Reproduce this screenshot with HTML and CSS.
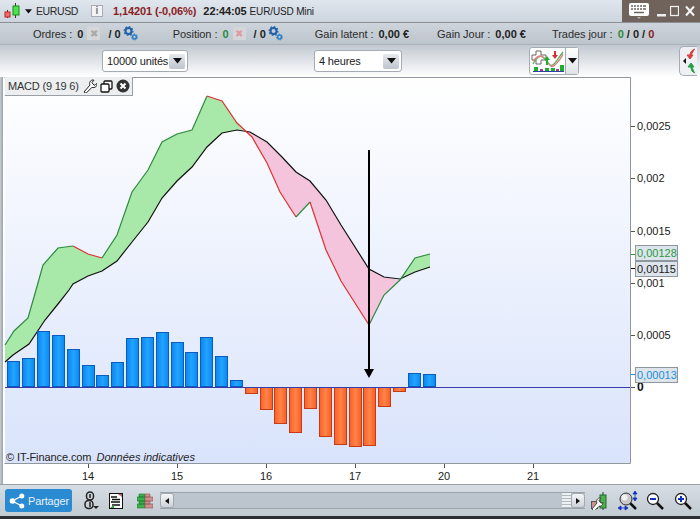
FILE: index.html
```html
<!DOCTYPE html>
<html lang="en">
<head>
  <meta charset="UTF-8">
  <meta name="viewport" content="width=device-width, initial-scale=1.0">
  <title>EURUSD Mini</title>
  <link rel="stylesheet" href="styles.css">
</head>
<body>
  <!-- Shared icons -->
  <svg class="defs" width="0" height="0">
    <defs>
      <symbol id="gears" viewBox="0 0 15 15">
        <circle cx="5.500" cy="5" r="3" fill="none" stroke="#1f5fa8" stroke-width="2"/>
        <circle cx="5.500" cy="5" r="4.400" fill="none" stroke="#1f5fa8" stroke-width="1.200" stroke-dasharray="1.700 1.700"/>
        <circle cx="11.500" cy="11" r="1.900" fill="none" stroke="#2f7fc8" stroke-width="1.500"/>
        <circle cx="11.500" cy="11" r="3" fill="none" stroke="#2f7fc8" stroke-width="1" stroke-dasharray="1.300 1.300"/>
      </symbol>
      <symbol id="caret" viewBox="0 0 9 6">
        <path d="M0 0h9L4.500 5.500z" fill="#111"/>
      </symbol>
      <linearGradient id="plot-bg" x1="0" y1="0" x2="0" y2="1">
        <stop offset="0" stop-color="#ffffff"/>
        <stop offset="1" stop-color="#d9e3fb"/>
      </linearGradient>
      <linearGradient id="blue-bar" x1="0" y1="0" x2="1" y2="0">
        <stop offset="0" stop-color="#0a84f0"/>
        <stop offset="0.500" stop-color="#23a4ff"/>
        <stop offset="1" stop-color="#0a88f2"/>
      </linearGradient>
      <linearGradient id="red-bar" x1="0" y1="0" x2="1" y2="0">
        <stop offset="0" stop-color="#fb5f26"/>
        <stop offset="0.500" stop-color="#ff8448"/>
        <stop offset="1" stop-color="#f95c22"/>
      </linearGradient>
    </defs>
  </svg>

  <div class="app">
    <!-- Title bar -->
    <header class="title-bar">
      <svg class="icon-candles" width="17" height="16" viewBox="0 0 17 16">
        <path d="M3.500 7v8M11.500 0v15" stroke="#333" fill="none"/>
        <rect x="1" y="9" width="5" height="5" fill="#f07070" stroke="#c02020"/>
        <rect x="9" y="3" width="6" height="9" fill="#50e050" stroke="#109010"/>
      </svg>
      <svg class="caret-top" width="7" height="5"><use href="#caret"/></svg>
      <span class="symbol">EURUSD</span>
      <span class="info-btn">i</span>
      <span class="price">1,14201 (-0,06%)</span>
      <span class="clock">22:44:05</span>
      <span class="market">EUR/USD Mini</span>
      <div class="win-controls">
        <svg width="20" height="16" viewBox="0 0 20 16">
          <rect x="0" y="0" width="20" height="13" rx="2" fill="#fff"/>
          <path d="M2 3h2M5 3h2M8 3h2M11 3h2M14 3h3M2 6h2M5 6h2M8 6h2M11 6h2M14 6h3M5 9.500h10" stroke="#6f635c" stroke-width="1.500"/>
          <path d="M8 14l2 2 2-2z" fill="#b8b0aa"/>
        </svg>
        <svg class="win-min" width="9" height="12" viewBox="0 0 9 12"><rect y="9" width="9" height="2.500" fill="#eee"/></svg>
        <svg class="win-max" width="9" height="12" viewBox="0 0 9 12"><rect x="0.500" y="1.500" width="8" height="9" fill="none" stroke="#eee" stroke-width="1.300"/></svg>
        <svg class="win-close" width="10" height="12" viewBox="0 0 10 12"><path d="M1 1.500l8 9M9 1.500l-8 9" stroke="#f4f4f4" stroke-width="2"/></svg>
      </div>
    </header>

    <!-- Account summary -->
    <div class="summary-bar">
      <span class="label label-orders">Ordres :</span>
      <b class="val">0</b>
      <span class="x-icon">&#10006;</span>
      <b class="val slash">/ 0</b>
      <svg class="gears" width="15" height="15"><use href="#gears"/></svg>

      <span class="label label-position">Position :</span>
      <b class="val green">0</b>
      <span class="x-icon x-red">&#10006;</span>
      <b class="val slash">/ 0</b>
      <svg class="gears" width="15" height="15"><use href="#gears"/></svg>

      <span class="label label-latent">Gain latent :</span>
      <b class="val">0,00 €</b>
      <span class="label label-jour">Gain Jour :</span>
      <b class="val">0,00 €</b>
      <span class="label label-trades">Trades jour :</span>
      <b class="val"><span class="green">0</span> / 0 / <span class="dark-red">0</span></b>
    </div>

    <!-- Selectors -->
    <div class="options-bar">
      <div class="select select-qty">
        <span>10000 unités</span>
        <i class="select-btn"><svg width="9" height="6"><use href="#caret"/></svg></i>
      </div>
      <div class="select select-period">
        <span>4 heures</span>
        <i class="select-btn"><svg width="9" height="6"><use href="#caret"/></svg></i>
      </div>
      <div class="indicator-btn">
        <svg width="34" height="24" viewBox="0 0 34 24">
          <path d="M4 2h5v4h5v5h-5v4h-5v-4h-4v-5h4z" transform="translate(1 0)" fill="#fff" stroke="#666"/>
          <path d="M2 15c5-9 8-9 12-5s5 9 9 5 5-7 9-12" fill="none" stroke="#5cae5c" stroke-width="1.300"/>
          <path d="M2 12c6-7 9-6 13-1s5 9 9 5 6-6 8-11" fill="none" stroke="#e08080" stroke-width="1.300"/>
          <path d="M13 11l3-4 3 4h-2v5h-2v-5z" fill="#18b030"/>
          <path d="M23 2h2v4h2l-3 4-3-4h2z" fill="#d83030"/>
          <path d="M3 18h4v4h-4zM20 19h4v3h-4zM29 16h4v6h-4zM14 19h4v3h-4z" fill="#18b030"/>
          <path d="M9 20h3v2h-3zM25 20h3v2h-3z" fill="#b83090"/>
          <path d="M2 22.500h31" stroke="#3040a0"/>
        </svg>
        <i class="indicator-caret"><svg width="9" height="6"><use href="#caret"/></svg></i>
      </div>
      <div class="side-tab">
        <svg width="17" height="30" viewBox="0 0 17 30">
          <path d="M3 15l3-3v6z" fill="#111"/>
          <path d="M15 3c-3 1-5 3-5 6v3M7 9l3 4 3-4z" fill="#d84040" stroke="#d84040"/>
          <path d="M15 27c-3-1-4-3-4-6v-3M8 21l3-4 3 4z" fill="#20a040" stroke="#20a040"/>
        </svg>
      </div>
    </div>

    <!-- Chart -->
    <main class="chart-frame">
      <div class="legend">
        <span class="legend-name">MACD (9 19 6)</span>
        <svg width="14" height="14" viewBox="0 0 14 14">
          <path d="M1 13l6-7c-1-2 0-5 3-5l1 .300-2 2 1 2 2 1 2-2c.300 3-2 5-5 4l-6 6z" fill="#fff" stroke="#222"/>
        </svg>
        <svg width="13" height="13" viewBox="0 0 13 13">
          <rect x="4" y="1" width="8" height="8" rx="1" fill="#fff" stroke="#111" stroke-width="1.300"/>
          <rect x="1" y="4" width="8" height="8" rx="1" fill="#fff" stroke="#111" stroke-width="1.300"/>
        </svg>
        <svg width="14" height="14" viewBox="0 0 14 14">
          <circle cx="7" cy="7" r="6.500" fill="#333"/>
          <path d="M4.500 4.500l5 5M9.500 4.500l-5 5" stroke="#fff" stroke-width="2"/>
        </svg>
      </div>

      <svg class="chart" width="693" height="407" viewBox="4 77 693 407">
        <rect x="5" y="78" width="625" height="385" fill="url(#plot-bg)"/>

        <!-- MACD / signal ribbon -->
        <polygon class="band-green" points="5,345 14,331 28,318 36,290 43,265 58,248 73,246 88,254 102,258 117,235 132,192 148,170 162,142 177,134 192,130 207,96 222,101 237,123 243,130 237,130 222,133 207,147 192,167 177,181 162,198 148,222 132,242 117,261 102,271 88,276 73,284 69,290 58,304 45,320 29,344 13,355 5,362"/>
        <polygon class="band-pink" points="243,130 250,132 267,142 282,157 296,172 310,181 326,200 341,225 369,269 384,277 399,280 384,295 369,325 341,281 326,250 310,202 296,217 280,192 267,163 252,137"/>
        <polygon class="band-green" points="399,280 415,258 430,254 430,267 415,272"/>

        <polyline class="line-signal" points="5,362 13,355 29,344 45,320 58,304 69,290 73,284 88,276 102,271 117,261 132,242 148,222 162,198 177,181 192,167 207,147 222,133 237,130 250,132 267,142 282,157 296,172 310,181 326,200 341,225 369,269 384,277 400,279 415,272 430,267"/>
        <polyline class="line-up" points="5,345 14,331 28,318 36,290 43,265 58,248 73,246"/>
        <polyline class="line-down" points="73,246 88,254 102,258"/>
        <polyline class="line-up" points="102,258 117,235 132,192 148,170 162,142 177,134 192,130 207,96"/>
        <polyline class="line-down" points="207,96 222,101 237,123 252,137 267,163 280,192 296,217"/>
        <polyline class="line-up" points="296,217 310,202"/>
        <polyline class="line-down" points="310,202 326,250 341,281 369,325"/>
        <polyline class="line-up" points="369,325 384,295 400,280 415,258 430,254"/>

        <!-- Histogram -->
        <g class="bars-up">
          <rect x="7.500" y="361.500" width="12" height="25"/>
          <rect x="22.500" y="358.500" width="12" height="28"/>
          <rect x="37.500" y="331.500" width="12" height="55"/>
          <rect x="52.500" y="335.500" width="12" height="51"/>
          <rect x="67.500" y="349.500" width="12" height="37"/>
          <rect x="82.500" y="365.500" width="12" height="21"/>
          <rect x="96.500" y="375.500" width="12" height="11"/>
          <rect x="111.500" y="362.500" width="12" height="24"/>
          <rect x="126.500" y="338.500" width="12" height="48"/>
          <rect x="141.500" y="337.500" width="12" height="49"/>
          <rect x="156.500" y="332.500" width="12" height="54"/>
          <rect x="171.500" y="342.500" width="12" height="44"/>
          <rect x="185.500" y="352.500" width="12" height="34"/>
          <rect x="200.500" y="337.500" width="12" height="49"/>
          <rect x="215.500" y="356.500" width="12" height="30"/>
          <rect x="230.500" y="380.500" width="12" height="6"/>
          <rect x="408.500" y="373.500" width="12" height="13"/>
          <rect x="423.500" y="374.500" width="12" height="12"/>
        </g>
        <g class="bars-down">
          <rect x="245.500" y="387.500" width="12" height="6"/>
          <rect x="260.500" y="387.500" width="12" height="22"/>
          <rect x="274.500" y="387.500" width="12" height="36"/>
          <rect x="289.500" y="387.500" width="12" height="45"/>
          <rect x="304.500" y="387.500" width="12" height="21"/>
          <rect x="319.500" y="387.500" width="12" height="49"/>
          <rect x="334.500" y="387.500" width="12" height="57"/>
          <rect x="349.500" y="387.500" width="12" height="59"/>
          <rect x="363.500" y="387.500" width="12" height="58"/>
          <rect x="378.500" y="387.500" width="12" height="19"/>
          <rect x="393.500" y="387.500" width="12" height="4"/>
        </g>
        <line class="zero-line" x1="5" y1="387.500" x2="630" y2="387.500"/>

        <!-- Arrow drawn on the chart -->
        <rect x="368" y="150" width="2" height="222" fill="#000"/>
        <polygon points="364,369 374,369 369,378" fill="#000"/>

        <!-- Frame -->
        <path class="plot-frame" d="M4.500 77.500H630.500V463.500H4.500"/>

        <!-- Price axis -->
        <path class="tick" d="M631 126.500h4M631 178.500h4M631 231.500h4M631 283.500h4M631 335.500h4M631 387.500h4"/>
        <g class="axis-text">
          <text x="637" y="130">0,0025</text>
          <text x="637" y="182">0,002</text>
          <text x="637" y="235">0,0015</text>
          <text x="637" y="287">0,001</text>
          <text x="637" y="339">0,0005</text>
        </g>
        <text class="axis-zero" x="637" y="391">0</text>

        <path d="M631 254.500h4" stroke="#2a9a40"/>
        <rect class="tag" x="635.500" y="245.500" width="42" height="15"/>
        <text class="tag-text tag-green" x="637" y="257">0,00128</text>
        <path d="M631 268.500h4" stroke="#111"/>
        <rect class="tag" x="635.500" y="261.500" width="42" height="15"/>
        <text class="tag-text tag-black" x="637" y="273">0,00115</text>
        <path d="M631 374.500h4" stroke="#2090e0"/>
        <rect class="tag" x="635.500" y="367.500" width="42" height="15"/>
        <text class="tag-text tag-blue" x="637" y="379">0,00013</text>

        <!-- Time axis -->
        <path class="tick" d="M88.500 464v4M177.500 464v4M266.500 464v4M355.500 464v4M444.500 464v4M533.500 464v4"/>
        <g class="axis-text" text-anchor="middle">
          <text x="88" y="480">14</text>
          <text x="177" y="480">15</text>
          <text x="266" y="480">16</text>
          <text x="355" y="480">17</text>
          <text x="444" y="480">20</text>
          <text x="533" y="480">21</text>
        </g>
      </svg>

      <div class="credit"><span class="credit-name">© IT-Finance.com</span> <em>Données indicatives</em></div>
    </main>

    <!-- Bottom toolbar -->
    <footer class="tool-bar">
      <div class="share-btn">
        <svg width="16" height="16" viewBox="0 0 16 16">
          <path d="M3 8l10-5M3 8l10 5" stroke="#fff" stroke-width="1.300"/>
          <circle cx="3.500" cy="8" r="2.800" fill="#fff"/>
          <circle cx="12.800" cy="3" r="2.500" fill="#fff"/>
          <circle cx="12.800" cy="13" r="2.500" fill="#fff"/>
        </svg>
        <span>Partager</span>
      </div>
      <svg class="tool-chain" width="15" height="19" viewBox="0 0 15 19">
        <rect x="2.500" y="1" width="7" height="8" rx="3.500" fill="none" stroke="#222" stroke-width="1.500"/>
        <path d="M6 3v4M6 11v5" stroke="#222" stroke-width="1.500"/>
        <rect x="1" y="9.500" width="8" height="8" rx="3.500" fill="none" stroke="#222" stroke-width="1.500"/>
        <path d="M9 15h6l-3 3z" fill="#222"/>
      </svg>
      <svg class="tool-doc" width="14" height="16" viewBox="0 0 14 16">
        <rect x="0.500" y="0.500" width="13" height="15" fill="#fff" stroke="#111"/>
        <path d="M2 4h6M3 6.500h8M2 9h9M3 12h8" stroke="#111" stroke-width="1.300"/>
        <path d="M9 1h4v3z" fill="#c06060"/>
        <path d="M1 15l4-3v3z" fill="#30a040"/>
      </svg>
      <svg class="tool-bricks" width="16" height="16" viewBox="0 0 16 16">
        <path d="M2 1h6v3h-6zM0 4h8v4h-8zM2 8h6v3h-6zM0 11h8v4h-8z" fill="#3cb04c" stroke="#1a7a2c" stroke-width="0.600"/>
        <path d="M8 1h5v3h-5zM8 4h8v4h-8zM8 8h5v3h-5zM8 11h8v4h-8z" fill="#d09090" stroke="#905050" stroke-width="0.600"/>
      </svg>
      <div class="scrollbar">
        <i class="scroll-btn"><b class="arrow-left"></b></i>
        <span class="scroll-track"></span>
        <i class="scroll-grip"></i>
        <i class="scroll-btn"><b class="arrow-right"></b></i>
      </div>
      <svg class="tool-wrench" width="17" height="18" viewBox="0 0 17 18">
        <rect x="9" y="3" width="6" height="13" fill="#50b050" stroke="#1a6a2a"/>
        <path d="M12 0v3M12 16v2" stroke="#333"/>
        <rect x="0.500" y="9.500" width="6" height="7" fill="#d09090" stroke="#555"/>
        <path d="M1 17l5-6c-1-2 0-5 3-5l1 .300-2 2 1 2 2 1 1-1c0 3-2 4-4 4l-5 5z" fill="#fff" stroke="#222" stroke-width="0.800"/>
      </svg>
      <svg class="tool-zoom-fit" width="20" height="20" viewBox="0 0 20 20">
        <path d="M12 12l6 6" stroke="#111" stroke-width="2.500"/>
        <circle cx="8" cy="8" r="6" fill="#c8c8c8" stroke="#333"/>
        <circle cx="6.500" cy="6.500" r="3" fill="#f2f2f2"/>
        <path d="M17 0l-2 3h4zM17 10l-2-3h4zM17 3v4" fill="#1030c0" stroke="#1030c0" stroke-width="0.800"/>
        <path d="M0 17l3-2v4zM10 17l-3-2v4zM3 17h4" fill="#1030c0" stroke="#1030c0" stroke-width="0.800"/>
      </svg>
      <svg class="tool-zoom" width="18" height="18" viewBox="0 0 18 18">
        <path d="M10 10l7 7" stroke="#111" stroke-width="2.500"/>
        <circle cx="7" cy="7" r="5.500" fill="#fff" stroke="#222" stroke-width="1.300"/>
        <path d="M4 7h6" stroke="#1030c0" stroke-width="2"/>
      </svg>
      <svg class="tool-zoom tool-zoom-in" width="18" height="18" viewBox="0 0 18 18">
        <path d="M10 10l7 7" stroke="#111" stroke-width="2.500"/>
        <circle cx="7" cy="7" r="5.500" fill="#fff" stroke="#222" stroke-width="1.300"/>
        <path d="M4 7h6M7 4v6" stroke="#1030c0" stroke-width="2"/>
      </svg>
    </footer>
    <div class="bottom-edge"></div>
  </div>
</body>
</html>
```

FILE: styles.css
```css
/* Page */
html, body {
  margin: 0;
  padding: 0;
  height: 100%;
  overflow: hidden;
}

body {
  font-family: "Liberation Sans", Arial, sans-serif;
  font-size: 11px;
  color: #222;
  background: #c8d0d8;
}

.defs {
  position: absolute;
}

.app {
  display: flex;
  flex-direction: column;
  width: 700px;
  height: 519px;
}

/* Title bar */
.title-bar {
  display: flex;
  align-items: center;
  height: 22px;
  padding-left: 4px;
  background: linear-gradient(to bottom, #dfe6ee, #ccd4dd);
  border-bottom: 1px solid #8b9096;
}

.caret-top {
  margin-left: 4px;
}

.symbol {
  margin-left: 4px;
  font-size: 10.5px;
  letter-spacing: -0.4px;
  color: #2a2a2a;
}

.info-btn {
  width: 12px;
  height: 12px;
  margin-left: 13px;
  background: #f4f4f4;
  border: 1px solid #aab;
  box-sizing: border-box;
  color: #777;
  font-weight: bold;
  font-size: 10px;
  line-height: 10px;
  text-align: center;
}

.price {
  margin-left: 10px;
  font-weight: bold;
  letter-spacing: -0.1px;
  color: #8c1c24;
}

.clock {
  margin-left: 7px;
  font-weight: bold;
  letter-spacing: -0.1px;
  color: #222;
}

.market {
  margin-left: 3px;
  font-size: 10px;
  letter-spacing: -0.15px;
}

.win-controls {
  display: flex;
  align-items: center;
  align-self: stretch;
  margin-left: auto;
  width: 78px;
  padding-left: 7px;
  box-sizing: border-box;
  background: #6f635c;
}

.win-min {
  margin-left: 8px;
}

.win-max {
  margin-left: 4px;
}

.win-close {
  margin-left: 6px;
}

/* Account summary */
.summary-bar {
  display: flex;
  align-items: center;
  height: 22px;
  background: linear-gradient(to bottom, #cdd4dc, #bcc4cc);
  border-bottom: 1px solid #a8afb6;
  box-sizing: border-box;
  padding-left: 33px;
  color: #2c2c2c;
}

.label {
  letter-spacing: -0.05px;
}

.val {
  margin-left: 5px;
  color: #222;
}

.slash {
  margin-left: 8px;
}

.green {
  color: #2a8a3c;
}

.dark-red {
  color: #8c1c24;
}

.x-icon {
  width: 13px;
  height: 13px;
  margin-left: 4px;
  background: #d4d6d8;
  color: #aaa;
  font-size: 10px;
  line-height: 13px;
  text-align: center;
}

.x-red {
  color: #e09aa0;
}

.gears {
  margin-left: 2px;
}

.label-position {
  margin-left: 35px;
}

.label-latent {
  margin-left: 32px;
}

.label-jour {
  margin-left: 28px;
}

.label-trades {
  margin-left: 26px;
}

/* Selectors */
.options-bar {
  display: flex;
  align-items: center;
  height: 32px;
  box-sizing: border-box;
  padding: 0 3px 0 102px;
  background: linear-gradient(to bottom, #c2c9d1, #ffffff);
}

.select {
  display: flex;
  align-items: center;
  justify-content: space-between;
  height: 22px;
  padding: 0 2px 0 4px;
  box-sizing: border-box;
  background: #fff;
  border: 1px solid #a4abb2;
  border-radius: 3px;
  font-size: 11px;
  letter-spacing: -0.15px;
  white-space: nowrap;
}

.select-qty {
  width: 86px;
}

.select-period {
  width: 88px;
  margin-left: 126px;
}

.select-btn {
  display: flex;
  align-items: center;
  justify-content: center;
  width: 16px;
  height: 15px;
  background: linear-gradient(to bottom, #e6eaee, #bcc4ce);
  border-radius: 2px;
}

.indicator-btn {
  display: flex;
  align-items: center;
  height: 28px;
  width: 50px;
  margin-left: 127px;
  padding-left: 1px;
  box-sizing: border-box;
  background: #fff;
  border: 1px solid #a4abb2;
  border-radius: 3px;
}

.indicator-btn > svg {
  flex: none;
}

.indicator-caret {
  display: flex;
  align-items: center;
  justify-content: center;
  align-self: stretch;
  flex: 1;
  border-left: 1px solid #a4abb2;
  background: linear-gradient(to bottom, #fff, #dfe3e8);
}

.side-tab {
  display: flex;
  align-items: center;
  height: 30px;
  width: 18px;
  margin-left: auto;
  box-sizing: border-box;
  background: #eef0f3;
  border: 1px solid #a4abb2;
  border-right: none;
  border-radius: 5px 0 0 5px;
}

/* Chart */
.chart-frame {
  position: relative;
  height: 407px;
  padding-left: 4px;
  padding-right: 3px;
  background: linear-gradient(to right, #c8ccd2 0, #9aa2aa 3px, #fff 3px);
}

.chart {
  display: block;
  background: #fff;
}

.legend {
  position: absolute;
  top: 0;
  left: 5px;
  display: flex;
  align-items: center;
  gap: 3px;
  height: 18px;
  padding: 0 2px 0 3px;
  background: #eceef0;
  border-right: 1px solid #9aa0a6;
  border-bottom: 1px solid #9aa0a6;
  font-size: 11px;
  color: #333;
}

.legend-name {
  margin-right: 1px;
  letter-spacing: -0.2px;
}

.credit {
  position: absolute;
  top: 374px;
  left: 6px;
  font-size: 11px;
  color: #222;
}

.credit-name {
  letter-spacing: -0.1px;
}

.credit em {
  margin-left: 2px;
}

.band-green {
  fill: #a8e8a8;
}

.band-pink {
  fill: #f4c4dc;
}

.line-signal,
.line-up,
.line-down {
  fill: none;
  stroke-width: 1.2;
}

.line-signal {
  stroke: #111;
}

.line-up {
  stroke: #2e8b3e;
}

.line-down {
  stroke: #e03030;
}

.bars-up rect {
  fill: url(#blue-bar);
  stroke: #0a5cc0;
}

.bars-down rect {
  fill: url(#red-bar);
  stroke: #c83a14;
}

.zero-line {
  stroke: #3a3aa8;
}

.plot-frame {
  fill: none;
  stroke: #8f969e;
}

.tick {
  stroke: #555;
  fill: none;
}

.axis-text text,
.axis-zero,
.tag-text {
  font-family: "Liberation Sans", Arial, sans-serif;
  font-size: 11px;
  fill: #222;
}

.axis-zero {
  font-size: 12px;
  font-weight: bold;
  fill: #111;
}

.tag {
  fill: #dde4ec;
  stroke: #8f969e;
}

.tag-green {
  fill: #2a9a40;
}

.tag-black {
  fill: #222;
}

.tag-blue {
  fill: #2090e0;
}

/* Bottom toolbar */
.tool-bar {
  display: flex;
  align-items: center;
  height: 32px;
  box-sizing: border-box;
  padding: 0 8px 0 5px;
  background: linear-gradient(to bottom, #d6dde4, #c2cad2);
  border-top: 1px solid #9aa0a6;
}

.share-btn {
  display: flex;
  align-items: center;
  gap: 3px;
  width: 67px;
  height: 23px;
  padding-left: 4px;
  box-sizing: border-box;
  background: #2a8ad2;
  border-radius: 3px;
  color: #e8f2fa;
  font-size: 11px;
  letter-spacing: -0.15px;
}

.tool-chain {
  margin-left: 12px;
}

.tool-doc {
  margin-left: 10px;
}

.tool-bricks {
  margin-left: 14px;
}

.scrollbar {
  display: flex;
  align-items: center;
  width: 425px;
  height: 17px;
  margin-left: 7px;
  background: #bcc4cd;
  border-top: 1px solid #9aa2aa;
  border-bottom: 1px solid #9aa2aa;
  box-sizing: border-box;
}

.scroll-track {
  flex: 1;
}

.scroll-btn {
  display: flex;
  align-items: center;
  justify-content: center;
  width: 14px;
  height: 15px;
  background: linear-gradient(to bottom, #f4f6f8, #ccd3da);
  border: 1px solid #a0a8b0;
  border-radius: 3px;
  box-sizing: border-box;
}

.scroll-grip {
  width: 9px;
  height: 15px;
  background: repeating-linear-gradient(to bottom, #eef1f4 0, #eef1f4 2px, #b0b8c0 2px, #b0b8c0 3px);
}

.arrow-left {
  border: 3px solid transparent;
  border-right: 4px solid #111;
  border-left: none;
}

.arrow-right {
  border: 3px solid transparent;
  border-left: 4px solid #111;
  border-right: none;
}

.tool-wrench {
  margin-left: 6px;
}

.tool-zoom-fit {
  margin-left: 10px;
}

.tool-zoom {
  margin-left: 8px;
}

.tool-zoom-in {
  margin-left: 10px;
}

.bottom-edge {
  height: 3px;
  background: #2c3034;
}
```
